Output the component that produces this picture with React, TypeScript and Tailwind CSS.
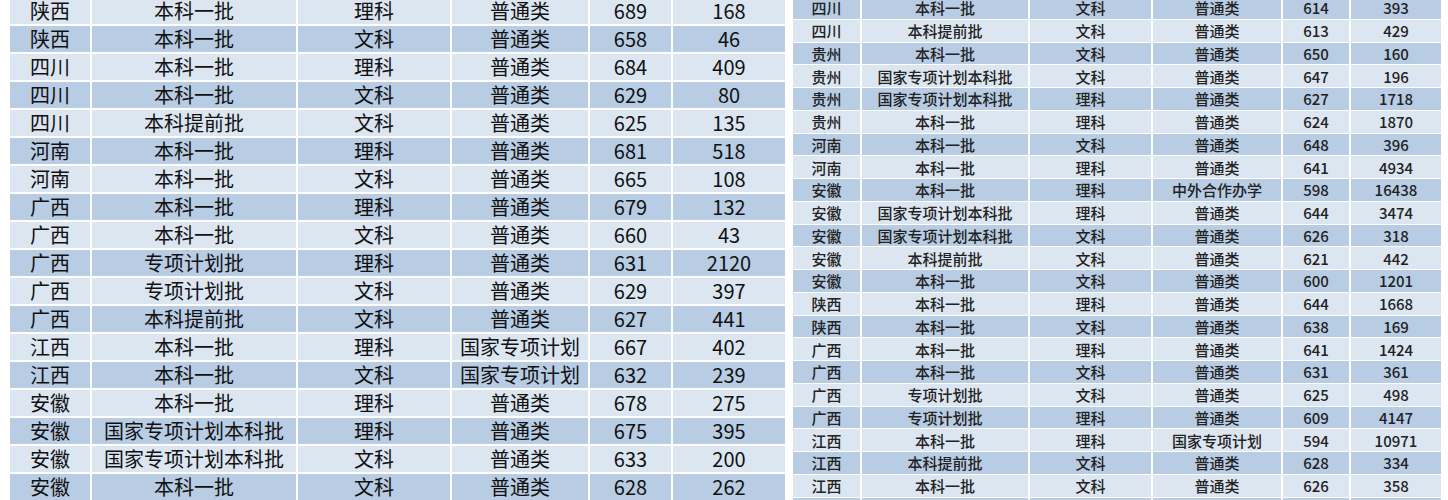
import React from "react";

type Row = [string, string, string, string, string, string];

const leftRows: Row[] = [
  ["陕西", "本科一批", "理科", "普通类", "689", "168"],
  ["陕西", "本科一批", "文科", "普通类", "658", "46"],
  ["四川", "本科一批", "理科", "普通类", "684", "409"],
  ["四川", "本科一批", "文科", "普通类", "629", "80"],
  ["四川", "本科提前批", "文科", "普通类", "625", "135"],
  ["河南", "本科一批", "理科", "普通类", "681", "518"],
  ["河南", "本科一批", "文科", "普通类", "665", "108"],
  ["广西", "本科一批", "理科", "普通类", "679", "132"],
  ["广西", "本科一批", "文科", "普通类", "660", "43"],
  ["广西", "专项计划批", "理科", "普通类", "631", "2120"],
  ["广西", "专项计划批", "文科", "普通类", "629", "397"],
  ["广西", "本科提前批", "文科", "普通类", "627", "441"],
  ["江西", "本科一批", "理科", "国家专项计划", "667", "402"],
  ["江西", "本科一批", "文科", "国家专项计划", "632", "239"],
  ["安徽", "本科一批", "理科", "普通类", "678", "275"],
  ["安徽", "国家专项计划本科批", "理科", "普通类", "675", "395"],
  ["安徽", "国家专项计划本科批", "文科", "普通类", "633", "200"],
  ["安徽", "本科一批", "文科", "普通类", "628", "262"],
];

const rightRows: Row[] = [
  ["四川", "本科一批", "文科", "普通类", "614", "393"],
  ["四川", "本科提前批", "文科", "普通类", "613", "429"],
  ["贵州", "本科一批", "文科", "普通类", "650", "160"],
  ["贵州", "国家专项计划本科批", "文科", "普通类", "647", "196"],
  ["贵州", "国家专项计划本科批", "理科", "普通类", "627", "1718"],
  ["贵州", "本科一批", "理科", "普通类", "624", "1870"],
  ["河南", "本科一批", "文科", "普通类", "648", "396"],
  ["河南", "本科一批", "理科", "普通类", "641", "4934"],
  ["安徽", "本科一批", "理科", "中外合作办学", "598", "16438"],
  ["安徽", "国家专项计划本科批", "理科", "普通类", "644", "3474"],
  ["安徽", "国家专项计划本科批", "文科", "普通类", "626", "318"],
  ["安徽", "本科提前批", "文科", "普通类", "621", "442"],
  ["安徽", "本科一批", "文科", "普通类", "600", "1201"],
  ["陕西", "本科一批", "理科", "普通类", "644", "1668"],
  ["陕西", "本科一批", "文科", "普通类", "638", "169"],
  ["广西", "本科一批", "理科", "普通类", "641", "1424"],
  ["广西", "本科一批", "文科", "普通类", "631", "361"],
  ["广西", "专项计划批", "文科", "普通类", "625", "498"],
  ["广西", "专项计划批", "理科", "普通类", "609", "4147"],
  ["江西", "本科一批", "理科", "国家专项计划", "594", "10971"],
  ["江西", "本科提前批", "文科", "普通类", "628", "334"],
  ["江西", "本科一批", "文科", "普通类", "626", "358"],
  ["", "", "", "", "", ""],
];

const font = { fontFamily: '"Noto Sans CJK SC", "Noto Sans", sans-serif' };

function LeftTable() {
  return (
    <div className="flex flex-col w-[775px] -mt-[2px]">
      {leftRows.map((r, i) => (
        <div
          key={i}
          className={`grid grid-cols-[82px_206px_154px_138px_83px_112px] h-[28px] border-b-2 border-white ${
            i % 2 === 0 ? "bg-[#dce6f1]" : "bg-[#b8cce4]"
          }`}
        >
          {r.map((c, j) => (
            <div
              key={j}
              className={`flex items-center justify-center text-[20px] leading-none text-[#111] ${
                j < 5 ? "border-r-2 border-white" : ""
              }`}
            >
              {c}
            </div>
          ))}
        </div>
      ))}
    </div>
  );
}

function RightTable() {
  return (
    <div className="flex flex-col w-[648px] -mt-[3px]">
      {rightRows.map((r, i) => (
        <div
          key={i}
          className={`grid grid-cols-[69px_168px_123px_130px_68px_90px] h-[22.75px] border-b border-white ${
            i % 2 === 0 ? "bg-[#b8cce4]" : "bg-[#dce6f1]"
          }`}
        >
          {r.map((c, j) => (
            <div
              key={j}
              className={`flex items-center justify-center text-[15px] leading-none font-medium text-[#222] ${
                j < 5 ? "border-r-2 border-white" : ""
              }`}
            >
              {c}
            </div>
          ))}
        </div>
      ))}
    </div>
  );
}

export default function App() {
  return (
    <div
      className="w-[1448px] h-[500px] overflow-hidden bg-white flex items-start"
      style={font}
    >
      <div className="pl-[10px] flex">
        <LeftTable />
      </div>
      <div className="ml-[8px] flex">
        <RightTable />
      </div>
    </div>
  );
}
